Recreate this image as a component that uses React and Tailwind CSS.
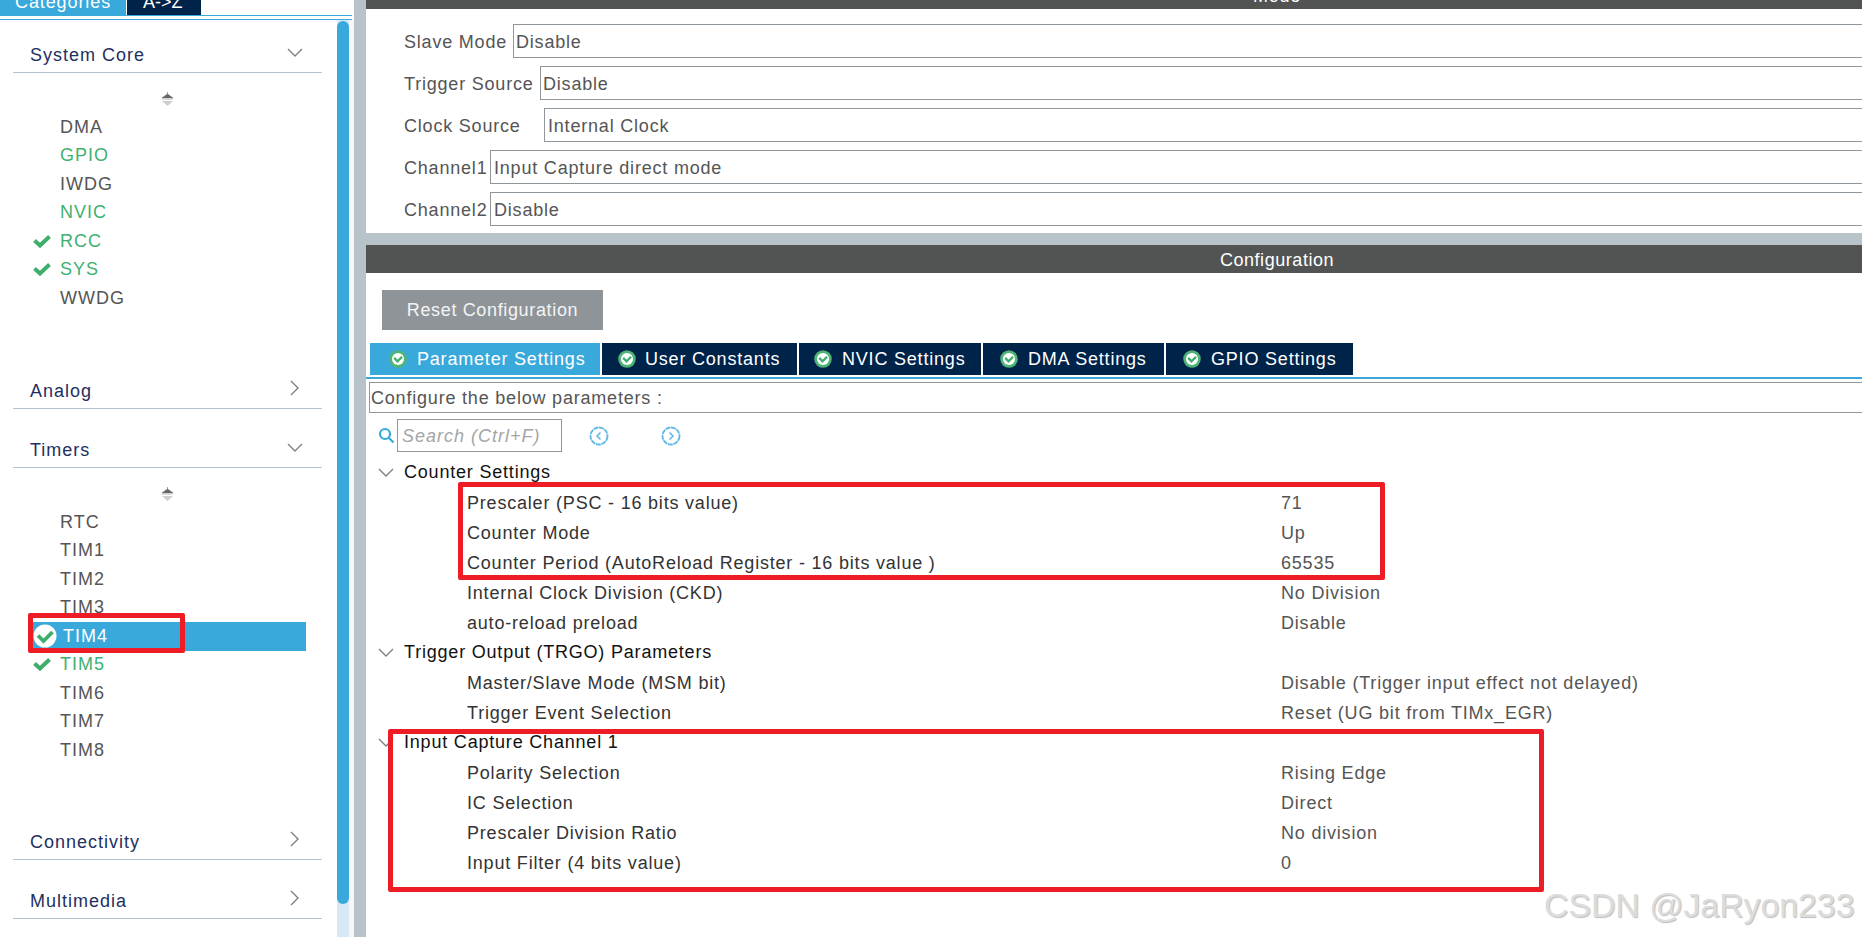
const font = { fontFamily: '"Liberation Sans", Arial, sans-serif' };

function Tick({ className }) {
  return (
    <svg viewBox="0 0 18 13" className={className}>
      <path d="M1.5 5.5 L7 10.5 L16.5 1.5" fill="none" stroke="#3fae6c" strokeWidth="4" />
    </svg>
  );
}

function CheckDisc() {
  return (
    <svg viewBox="0 0 16 16" width={18} height={18} className="shrink-0">
      <circle cx="8" cy="8" r="7.8" fill="#4fb577" />
      <circle cx="8" cy="8" r="5.4" fill="#ffffff" />
      <path d="M4.6 7 L7.6 10 L11.6 6" fill="none" stroke="#3fae6c" strokeWidth="2.1" />
    </svg>
  );
}

function WhiteDisc() {
  return (
    <svg viewBox="0 0 24 24" width={24} height={24} className="shrink-0">
      <circle cx="12" cy="12" r="11.5" fill="#ffffff" />
      <path d="M5 11.5 L10.5 17 L19.5 8" fill="none" stroke="#3fae6c" strokeWidth="3.8" />
    </svg>
  );
}

function ChevronDown({ className }) {
  return (
    <svg viewBox="0 0 16 9" className={className}>
      <path d="M1 1 L8 8 L15 1" fill="none" stroke="#808080" strokeWidth="1.4" />
    </svg>
  );
}

function ChevronRight({ className }) {
  return (
    <svg viewBox="0 0 9 16" className={className}>
      <path d="M1 1 L8 8 L1 15" fill="none" stroke="#808080" strokeWidth="1.4" />
    </svg>
  );
}

function SortHandle() {
  return (
    <svg viewBox="0 0 13 15" className="ml-[148px] h-[15px] w-[13px]">
      <path d="M6.5 0 L6.5 2 M1 6 L6.5 2 L12 6 Z" fill="#666666" stroke="#666666" strokeWidth="0.6" />
      <rect x="1" y="7" width="11" height="1" fill="#dddddd" />
      <path d="M1 9 L12 9 L6.5 14 Z" fill="#cfcfcf" />
    </svg>
  );
}

function NavCircle({ dir }) {
  return (
    <svg viewBox="0 0 20 20" className="h-[20px] w-[20px]">
      <circle cx="10" cy="10" r="8.5" fill="none" stroke="#5db8e4" strokeWidth="1.8" strokeDasharray="5 0.7" />
      <path
        d={dir === "left" ? "M11.5 6.5 L8 10 L11.5 13.5" : "M8.5 6.5 L12 10 L8.5 13.5"}
        fill="none"
        stroke="#5db8e4"
        strokeWidth="1.5"
      />
    </svg>
  );
}

function SearchGlass() {
  return (
    <svg viewBox="0 0 17 17" className="h-[17px] w-[17px] shrink-0">
      <circle cx="7" cy="7" r="5" fill="none" stroke="#39a9dc" strokeWidth="2.2" />
      <path d="M10.8 10.8 L15.5 15.5" stroke="#39a9dc" strokeWidth="2.2" />
    </svg>
  );
}

function SideHeader({ label, open }) {
  return (
    <div className="flex h-[59px] items-end justify-between border-b border-[#b4c2cf] pb-[6px] pl-[17px] pr-[19px]">
      <span className="text-[18px] leading-[22px] tracking-[1px] text-[#22305f]">{label}</span>
      {open ? (
        <ChevronDown className="mb-[9px] h-[9px] w-[16px]" />
      ) : (
        <ChevronRight className="mb-[6px] mr-[4px] h-[16px] w-[9px]" />
      )}
    </div>
  );
}

function SideItem({ name, state }) {
  if (state === "active") {
    return (
      <div className="flex h-[28.5px] w-[273px] items-center bg-[#39a9dc] text-white">
        <WhiteDisc />
        <span className="ml-[6px]">{name}</span>
      </div>
    );
  }
  const green = state === "green" || state === "check";
  return (
    <div className={`flex h-[28.5px] items-center ${green ? "text-[#3fb171]" : "text-[#555555]"}`}>
      <div className="w-[27px] shrink-0">{state === "check" && <Tick className="h-[13px] w-[18px]" />}</div>
      <span>{name}</span>
    </div>
  );
}

function SideList({ items, height }) {
  return (
    <div className={`${height} pt-[19px]`}>
      <SortHandle />
      <div className="ml-[20px] mt-[6px] text-[18px] tracking-[1px]">
        {items.map(([name, state]) => (
          <SideItem key={name} name={name} state={state} />
        ))}
      </div>
    </div>
  );
}

function Sidebar() {
  return (
    <div className="flex w-[354px] shrink-0 flex-col bg-white">
      <div className="flex h-[15px] overflow-hidden text-[18px] text-white">
        <div className="w-[126px] bg-[#39a9dc] pl-[15px]">
          <div className="-mt-[10px] leading-[24px] tracking-[0.9px]">Categories</div>
        </div>
        <div className="ml-px w-[74px] bg-[#00234a] pl-[16px]">
          <div className="-mt-[10px] leading-[24px]">A-&gt;Z</div>
        </div>
      </div>
      <div className="mr-[2px] h-[5px] border-y border-[#39a9dc]" />
      <div className="flex flex-1">
        <div className="w-[337px] pl-[13px]">
          <div className="w-[309px] -mt-[6px]">
            <SideHeader label="System Core" open />
            <SideList
              height="h-[277px]"
              items={[
                ["DMA"],
                ["GPIO", "green"],
                ["IWDG"],
                ["NVIC", "green"],
                ["RCC", "check"],
                ["SYS", "check"],
                ["WWDG"],
              ]}
            />
            <SideHeader label="Analog" />
            <SideHeader label="Timers" open />
            <SideList
              height="h-[333px]"
              items={[
                ["RTC"],
                ["TIM1"],
                ["TIM2"],
                ["TIM3"],
                ["TIM4", "active"],
                ["TIM5", "check"],
                ["TIM6"],
                ["TIM7"],
                ["TIM8"],
              ]}
            />
            <SideHeader label="Connectivity" />
            <SideHeader label="Multimedia" />
          </div>
        </div>
        <div className="flex w-[12px] flex-col bg-[#d8e8f5]">
          <div className="mt-px h-[883px] rounded-full bg-[#39a9dc]" />
        </div>
        <div className="w-[5px] bg-[#f6f6f6]" />
      </div>
    </div>
  );
}

function ModeRow({ label, value, labelWidth, inset = "pl-[2px]" }) {
  return (
    <div className="flex h-[34px] items-center">
      <div className="shrink-0 pt-[2px] text-[#555555]" style={{ width: labelWidth }}>
        {label}
      </div>
      <div className={`flex h-[34px] flex-1 items-center border border-[#8f979c] pt-[2px] ${inset} text-[#555555]`}>
        {value}
      </div>
    </div>
  );
}

const tabs = [
  { label: "Parameter Settings", width: "w-[230px]", pad: "pl-[19px]", gap: "ml-[10px]", active: true },
  { label: "User Constants", width: "w-[195px]", pad: "pl-[16px]", gap: "ml-[9px]" },
  { label: "NVIC Settings", width: "w-[182px]", pad: "pl-[15px]", gap: "ml-[10px]" },
  { label: "DMA Settings", width: "w-[181px]", pad: "pl-[17px]", gap: "ml-[10px]" },
  { label: "GPIO Settings", width: "w-[187px]", pad: "pl-[17px]", gap: "ml-[10px]" },
];

function TreeSection({ label }) {
  return (
    <div className="flex h-[30.05px] items-center pl-[12px] pt-px text-[#111111]">
      <ChevronDown className="h-[9px] w-[16px]" />
      <span className="ml-[10px]">{label}</span>
    </div>
  );
}

function TreeItem({ label, value }) {
  return (
    <div className="flex h-[30.05px] items-center pt-[2px] text-[#333333]">
      <div className="w-[915px] shrink-0 pl-[101px]">{label}</div>
      <div className="text-[#555555]">{value}</div>
    </div>
  );
}

function MainPanel() {
  return (
    <div className="flex w-[1822px] shrink-0 flex-col bg-[#b7c2c9] text-[18px] tracking-[0.8px]">
      <div className="h-[9px] overflow-hidden bg-[#525454] text-center text-white">
        <div className="-mt-[14px] leading-[20px]">Mode</div>
      </div>
      <div className="flex h-[224px] flex-col gap-2 bg-white pl-[38px] pt-[15px]">
        <ModeRow label="Slave Mode" value="Disable" labelWidth={109} />
        <ModeRow label="Trigger Source" value="Disable" labelWidth={136} />
        <ModeRow label="Clock Source" value="Internal Clock" labelWidth={140} inset="pl-[3px]" />
        <ModeRow label="Channel1" value="Input Capture direct mode" labelWidth={86} inset="pl-[3px]" />
        <ModeRow label="Channel2" value="Disable" labelWidth={86} inset="pl-[3px]" />
      </div>
      <div className="h-[12px]" />
      <div className="flex h-[28px] items-center justify-center bg-[#525454] pt-[2px] tracking-[0.55px] text-white">
        Configuration
      </div>
      <div className="flex flex-1 flex-col bg-white">
        <div className="mb-[13px] ml-[16px] mt-[17px] flex h-[40px] w-[221px] items-center justify-center bg-[#8f9499] tracking-[0.65px] text-[#f4f4f4]">
          Reset Configuration
        </div>
        <div className="ml-[4px] flex h-[32px] gap-[2px]">
          {tabs.map((t) => (
            <div
              key={t.label}
              className={`flex items-center ${t.width} ${t.pad} text-white ${t.active ? "bg-[#39a9dc]" : "bg-[#00234a]"}`}
            >
              <CheckDisc />
              <span className={t.gap}>{t.label}</span>
            </div>
          ))}
        </div>
        <div className="mt-[2px] h-[2px] bg-[#39a9dc]" />
        <div className="ml-[3px] mt-[3px] flex h-[31px] items-center border border-[#8f979c] pl-[1px] pt-[2px] text-[#555555]">
          Configure the below parameters :
        </div>
        <div className="mt-[6px] flex h-[33px] items-center pl-[12px]">
          <SearchGlass />
          <div className="ml-[2px] flex h-[33px] w-[165px] shrink-0 items-center border border-[#8f979c] pl-[4px] pt-[2px] italic tracking-[1px] text-[#a5a5a5]">
            Search (Ctrl+F)
          </div>
          <div className="ml-[27px]">
            <NavCircle dir="left" />
          </div>
          <div className="ml-[52px]">
            <NavCircle dir="right" />
          </div>
        </div>
        <div className="mt-[5px]">
          <TreeSection label="Counter Settings" />
          <TreeItem label="Prescaler (PSC - 16 bits value)" value="71" />
          <TreeItem label="Counter Mode" value="Up" />
          <TreeItem label="Counter Period (AutoReload Register - 16 bits value )" value="65535" />
          <TreeItem label="Internal Clock Division (CKD)" value="No Division" />
          <TreeItem label="auto-reload preload" value="Disable" />
          <TreeSection label="Trigger Output (TRGO) Parameters" />
          <TreeItem label="Master/Slave Mode (MSM bit)" value="Disable (Trigger input effect not delayed)" />
          <TreeItem label="Trigger Event Selection" value="Reset (UG bit from TIMx_EGR)" />
          <TreeSection label="Input Capture Channel 1" />
          <TreeItem label="Polarity Selection" value="Rising Edge" />
          <TreeItem label="IC Selection" value="Direct" />
          <TreeItem label="Prescaler Division Ratio" value="No division" />
          <TreeItem label="Input Filter (4 bits value)" value="0" />
        </div>
      </div>
    </div>
  );
}

export default function App() {
  return (
    <div className="relative flex h-[937px] w-[1862px] overflow-hidden bg-white" style={font}>
      <Sidebar />
      <div className="w-[12px] shrink-0 bg-[#b7c2c9]" />
      <MainPanel />

      {/* annotations drawn over the screenshot */}
      <div className="absolute left-[28px] top-[613px] h-[40px] w-[157px] rounded-[2px] border-[5px] border-[#ee1c25]" />
      <div className="absolute left-[458px] top-[482px] h-[98px] w-[927px] rounded-[2px] border-[5px] border-[#ee1c25]" />
      <div className="absolute left-[388px] top-[729px] h-[163px] w-[1156px] rounded-[2px] border-[5px] border-[#ee1c25]" />

      <div className="absolute left-[1544px] top-[883px] whitespace-nowrap text-[33.8px] leading-[44px] text-[#dcdcdc] [text-shadow:1px_1px_1px_#bdbdbd]">
        CSDN @JaRyon233
      </div>
    </div>
  );
}
